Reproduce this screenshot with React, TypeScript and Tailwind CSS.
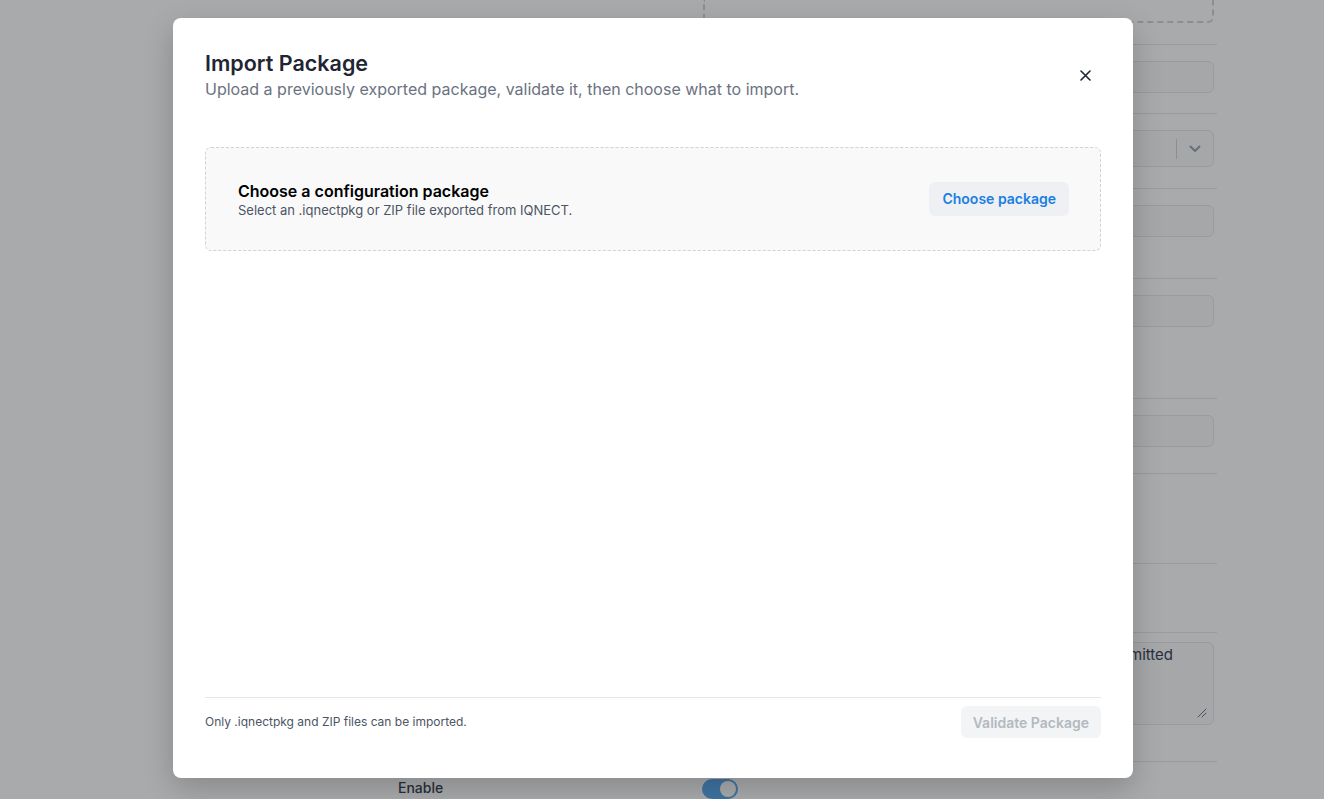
import React from "react";

function ChevronDown() {
  return (
    <svg width="12" height="8" viewBox="0 0 12 8" fill="none" className="text-[#9ca3af]">
      <path d="M1.5 1.5L6 6l4.5-4.5" stroke="currentColor" strokeWidth="2" strokeLinecap="round" strokeLinejoin="round" />
    </svg>
  );
}

function CloseIcon() {
  return (
    <svg width="11" height="11" viewBox="0 0 11 11" fill="none">
      <path d="M1 1l9 9M10 1L1 10" stroke="#1f2533" strokeWidth="1.6" strokeLinecap="round" />
    </svg>
  );
}

function ResizeGrip() {
  return (
    <svg width="10" height="10" viewBox="0 0 10 10" fill="none">
      <path d="M1 9L9 1M5 9L9 5" stroke="#6b7280" strokeWidth="1" strokeLinecap="round" />
    </svg>
  );
}

function TextInput() {
  return <div className="h-8 rounded-md border border-[#e5e7eb] bg-[#f9fafb]" />;
}

// Settings form sitting behind the dialog
function SettingsForm() {
  return (
    <div className="ml-[382px] w-[835px] text-sm text-[#374151]">
      <div className="grid grid-cols-[321px_511px] pb-[21px]">
        <div />
        <div className="h-[23px] rounded-b-md border-2 border-t-0 border-dashed border-[#d1d5db]" />
      </div>

      <div className="grid h-[69px] grid-cols-[321px_511px] border-t border-[#e5e7eb] pt-[16px]">
        <div />
        <TextInput />
      </div>

      <div className="grid h-[75px] grid-cols-[321px_511px] border-t border-[#e5e7eb] pt-[16px]">
        <div />
        <div className="flex h-[37px] items-center rounded-md border border-[#e5e7eb] bg-[#f9fafb]">
          <div className="flex-1" />
          <div className="h-5 w-px bg-[#d1d5db]" />
          <div className="flex w-[36px] items-center justify-center">
            <ChevronDown />
          </div>
        </div>
      </div>

      <div className="grid h-[90px] grid-cols-[321px_511px] border-t border-[#e5e7eb] pt-[16px]">
        <div />
        <TextInput />
      </div>

      <div className="grid h-[120px] grid-cols-[321px_511px] border-t border-[#e5e7eb] pt-[16px]">
        <div />
        <TextInput />
      </div>

      <div className="grid h-[75px] grid-cols-[321px_511px] border-t border-[#e5e7eb] pt-[16px]">
        <div />
        <TextInput />
      </div>

      <div className="h-[90px] border-t border-[#e5e7eb]" />
      <div className="h-[69px] border-t border-[#e5e7eb]" />

      <div className="grid h-[129px] grid-cols-[321px_511px] border-t border-[#e5e7eb] pt-[9px]">
        <div />
        <div className="relative h-[83px] overflow-hidden rounded-md border border-[#e5e7eb] bg-[#f9fafb] pr-[40px] pt-[1px] text-right text-[15px] whitespace-nowrap text-[#374151]">
          Message shown once the request has been submitted
          <div className="absolute bottom-[6px] right-[6px]">
            <ResizeGrip />
          </div>
        </div>
      </div>

      <div className="flex h-[60px] border-t border-[#e5e7eb]">
        <div className="w-[320px] pl-4 pt-[16px] text-[14px] font-medium">Enable</div>
        <div className="pt-[17px]">
          <div className="flex h-[20px] w-[36px] items-center justify-end rounded-full bg-[#5aa9f0] pr-[2px]">
            <div className="h-4 w-4 rounded-full bg-white" />
          </div>
        </div>
      </div>
    </div>
  );
}

export default function App() {
  return (
    <div className="relative h-[799px] overflow-hidden bg-white font-['Inter','Liberation_Sans',sans-serif]">
      <SettingsForm />

      <div className="absolute inset-0 bg-[rgba(17,19,24,0.36)]" />

      <div className="absolute inset-0 flex justify-start pl-[173px] pt-[18px]">
        <div className="flex h-[760px] w-[960px] flex-col rounded-lg bg-white px-8 pb-10 pt-[31px] shadow-[0_10px_30px_rgba(0,0,0,0.2)]">
          <div className="flex items-start justify-between">
            <div>
              <h2 className="text-[21.5px] leading-[28px] font-semibold text-[#1f2533]">Import Package</h2>
              <p className="text-[16px] leading-[24px] text-[#6b7280]">
                Upload a previously exported package, validate it, then choose what to import.
              </p>
            </div>
            <button className="mr-[6px] mt-[16px] flex h-5 w-5 items-center justify-center">
              <CloseIcon />
            </button>
          </div>

          <div className="mt-[46px] flex h-[104px] items-center justify-between rounded-md border border-dashed border-[#cfd3d9] bg-[#f9f9fa] pl-[32px] pr-[31px]">
            <div>
              <div className="text-[16px] leading-[22px] font-semibold text-black">Choose a configuration package</div>
              <div className="mt-[-1px] text-[13px] leading-[18px] text-[#4b5563]">
                Select an .iqnectpkg or ZIP file exported from IQNECT.
              </div>
            </div>
            <button className="mt-[-1px] h-[34px] rounded-md bg-[#eef0f4] px-[13px] text-[14px] font-semibold text-[#1a7fe0]">
              Choose package
            </button>
          </div>

          <div className="flex-1" />

          <div className="flex items-center justify-between border-t border-[#e5e7eb] pt-[8px]">
            <div className="text-[12px] text-[#4b5563]">Only .iqnectpkg and ZIP files can be imported.</div>
            <button className="h-[32px] rounded-md bg-[#f3f4f6] px-3 text-[14px] font-semibold text-[#b4b9c1]">
              Validate Package
            </button>
          </div>
        </div>
      </div>
    </div>
  );
}
